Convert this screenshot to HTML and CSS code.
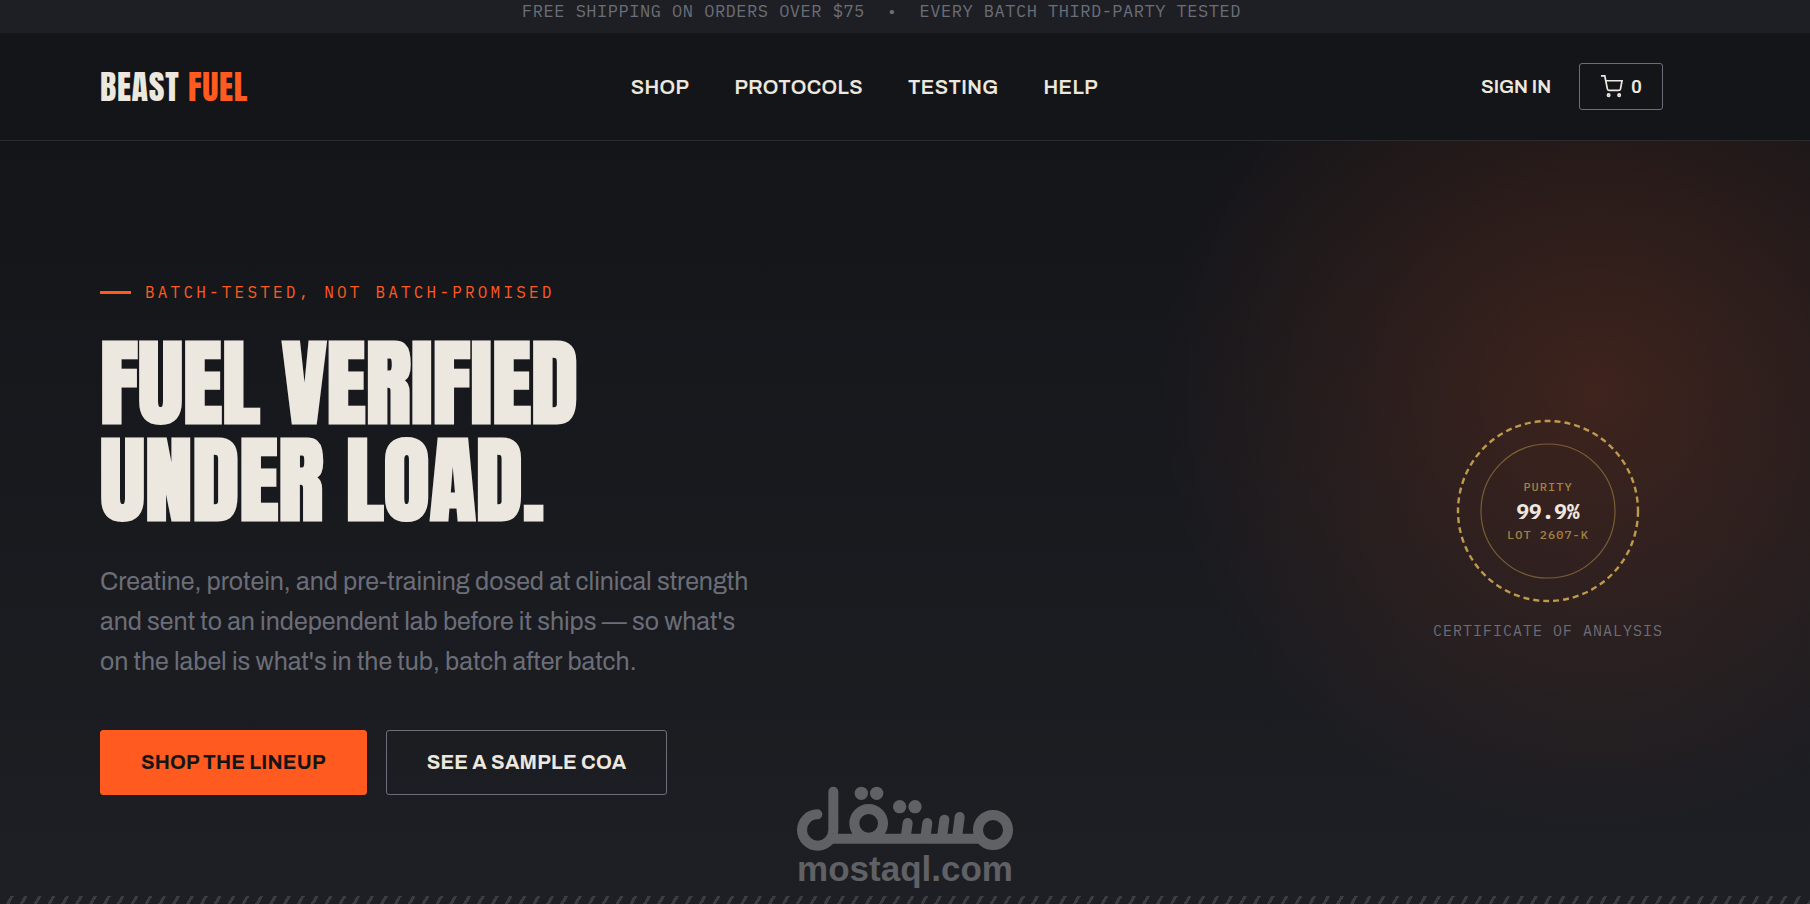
FILE: index.html
```html
<!DOCTYPE html>
<html lang="en">
<head>
  <meta charset="UTF-8">
  <meta name="viewport" content="width=device-width, initial-scale=1.0">
  <title>Beast Fuel</title>
  <link rel="stylesheet" href="styles.css">
</head>
<body>
  <div class="topbar">
    <p class="topbar-text">FREE SHIPPING ON ORDERS OVER $75<span class="dot">•</span>EVERY BATCH THIRD-PARTY TESTED</p>
  </div>

  <header class="header">
    <a class="logo" href="#">BEAST <span>FUEL</span></a>
    <nav class="nav">
      <a href="#">SHOP</a>
      <a href="#">PROTOCOLS</a>
      <a href="#">TESTING</a>
      <a href="#">HELP</a>
    </nav>
    <div class="actions">
      <a class="signin" href="#">SIGN IN</a>
      <button class="cart" type="button" aria-label="Cart, 0 items">
        <svg width="23" height="23" viewBox="0 0 24 24" fill="none" stroke="currentColor" stroke-width="1.8">
          <path d="M1 1h4l2.7 13.4a2 2 0 0 0 2 1.6h9.7a2 2 0 0 0 2-1.6L23 6H6"/>
          <circle cx="9" cy="21" r="1.2"/>
          <circle cx="20" cy="21" r="1.2"/>
        </svg>
        <span>0</span>
      </button>
    </div>
  </header>

  <main class="hero">
    <div class="hero-text">
      <p class="eyebrow">BATCH-TESTED, NOT BATCH-PROMISED</p>
      <h1>FUEL VERIFIED<br>UNDER LOAD.</h1>
      <p class="lead">Creatine, protein, and pre-training dosed at clinical strength and sent to an independent lab before it ships — so what's on the label is what's in the tub, batch after batch.</p>
      <div class="buttons">
        <a class="btn btn-fill" href="#">SHOP THE LINEUP</a>
        <a class="btn btn-line" href="#">SEE A SAMPLE COA</a>
      </div>
    </div>

    <figure class="seal">
      <svg width="188" height="188" viewBox="0 0 188 188">
        <circle class="ring-outer" cx="94" cy="94" r="90"/>
        <circle class="ring-inner" cx="94" cy="94" r="67"/>
        <text class="seal-small" x="94" y="74">PURITY</text>
        <text class="seal-big" x="94" y="102">99.9%</text>
        <text class="seal-small" x="94" y="122">LOT 2607-K</text>
      </svg>
      <figcaption>CERTIFICATE OF ANALYSIS</figcaption>
    </figure>
  </main>

  <div class="stripes"></div>

  <div class="watermark">
    <svg width="218" height="66" viewBox="46 46 654 198" fill="none" stroke="currentColor" stroke-width="30">
      <path stroke-linecap="round" d="M110 131A47 47 0 1 0 158 178V63"/>
      <path d="M142 204H608"/>
      <circle cx="264" cy="158" r="43"/>
      <circle cx="637" cy="178" r="45"/>
      <path stroke-linecap="round" d="M381 157L375 200M440 157L434 200M491 147L484 200M537 139L529 200"/>
      <g fill="currentColor" stroke="none">
        <circle cx="242" cy="68" r="20"/>
        <circle cx="288" cy="68" r="20"/>
        <circle cx="357" cy="108" r="20"/>
        <circle cx="403" cy="108" r="20"/>
      </g>
    </svg>
    <span>mostaql.com</span>
  </div>
</body>
</html>
```

FILE: styles.css
```css
* {
  box-sizing: border-box;
}
html, body {
  margin: 0;
  padding: 0;
  height: 100%;
}
body {
  background-color: #141519;
  color: #ece7df;
  font-family: Archivo, "Liberation Sans", Arial, sans-serif;
  display: flex;
  flex-direction: column;
  overflow: hidden;
}
p, h1, figure {
  margin: 0;
}
a {
  color: inherit;
  text-decoration: none;
}
.topbar {
  background-color: #1e1f24;
  padding: 0 147px 10px 100px;
  text-align: center;
}
.topbar-text {
  font-family: "IBM Plex Mono", "Liberation Mono", monospace;
  font-size: 17px;
  line-height: 23px;
  letter-spacing: 0.03em;
  color: #6b6e78;
}
.dot {
  margin: 0 22px;
}
.header {
  display: flex;
  justify-content: space-between;
  align-items: center;
  padding: 30px 147px 30px 100px;
  border-bottom: 1px solid #2a2b2f;
}
.logo {
  font-family: Anton, Impact, sans-serif;
  font-size: 34px;
  line-height: 47px;
  letter-spacing: 0.02em;
}
.logo span {
  color: #ff5a1f;
}
.nav {
  display: flex;
  gap: 45px;
  font-size: 20px;
  font-weight: 600;
  letter-spacing: 0.02em;
}
.signin, .cart {
  font-size: 19px;
  font-weight: 600;
}
.actions {
  display: flex;
  align-items: center;
  gap: 28px;
}
.cart {
  display: flex;
  align-items: center;
  gap: 8px;
  height: 47px;
  padding: 0 20px;
  background: none;
  border: 1px solid #6b6e78;
  border-radius: 3px;
  color: inherit;
  font-family: inherit;
  cursor: pointer;
}
.hero {
  flex: 1;
  display: flex;
  justify-content: space-between;
  align-items: center;
  padding: 38px 147px 0 100px;
  background:
    radial-gradient(circle 438px at calc(100% - 214px) 248px, rgba(255, 90, 31, 0.17), transparent),
    linear-gradient(#141519, #1e1f24);
}
.eyebrow {
  display: flex;
  align-items: center;
  gap: 14px;
  font-family: "IBM Plex Mono", "Liberation Mono", monospace;
  font-size: 16px;
  line-height: 24px;
  letter-spacing: 0.2em;
  color: #ff5a1f;
}
.eyebrow::before {
  content: "";
  width: 31px;
  height: 3px;
  background-color: #ff5a1f;
}
h1 {
  margin-top: 30px;
  font-family: Anton, Impact, sans-serif;
  font-size: 95px;
  line-height: 97px;
  font-weight: 900;
}
.lead {
  max-width: 665px;
  margin-top: 34px;
  font-size: 25px;
  line-height: 40px;
  color: #6b6e78;
}
.buttons {
  display: flex;
  gap: 19px;
  margin-top: 48px;
}
.btn {
  padding: 21px 40px;
  border: 1px solid #6b6e78;
  border-radius: 3px;
  font-size: 20px;
  font-weight: 700;
  letter-spacing: 0.01em;
  line-height: 21px;
}
.btn-fill {
  background-color: #ff5a1f;
  border-color: #ff5a1f;
  color: #141519;
}
.seal {
  display: flex;
  flex-direction: column;
  align-items: center;
  gap: 16px;
  margin-bottom: 18px;
}
.seal circle {
  fill: none;
  stroke: #bf9a4c;
}
.seal .ring-outer {
  stroke-width: 2.4;
  stroke-dasharray: 6 4;
}
.seal .ring-inner {
  stroke-width: 1.2;
  opacity: 0.5;
}
.seal text {
  font-family: "IBM Plex Mono", "DejaVu Sans Mono", monospace;
  text-anchor: middle;
}
.seal-small {
  font-size: 12px;
  font-weight: 500;
  letter-spacing: 1px;
  fill: #bf9a4c;
  opacity: 0.8;
}
.seal-big {
  font-size: 21px;
  font-weight: bold;
  fill: #ece7df;
}
figcaption {
  font-family: "IBM Plex Mono", "Liberation Mono", monospace;
  font-size: 15px;
  letter-spacing: 1px;
  color: #6b6e78;
}
.stripes {
  height: 8px;
  background: repeating-linear-gradient(120deg, #1e1f24 0 9px, #3a3c42 9px 12px);
}
.watermark {
  position: absolute;
  left: 50%;
  bottom: 18px;
  transform: translateX(-50%);
  display: flex;
  flex-direction: column;
  align-items: center;
  color: #606165;
  font-family: "Liberation Sans", Arial, sans-serif;
  font-size: 35px;
  font-weight: bold;
  line-height: 34px;
}
```
